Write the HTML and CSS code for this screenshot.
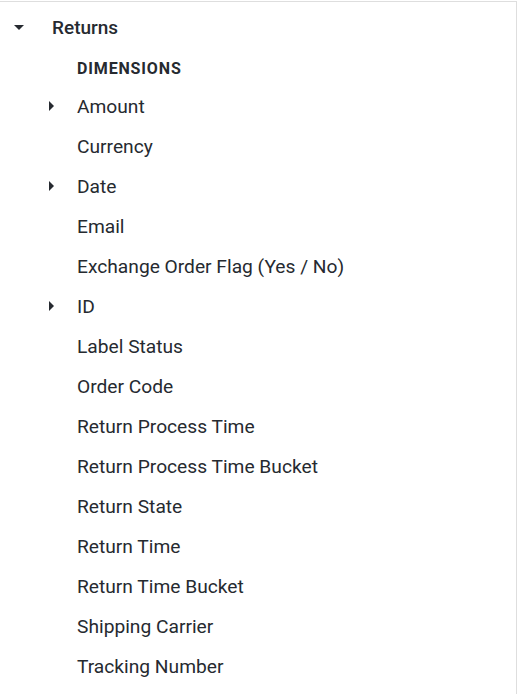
FILE: index.html
```html
<!DOCTYPE html>
<html>
<head>
<meta charset="utf-8">
<link rel="stylesheet" href="styles.css">
</head>
<body>
<div class="panel">
  <div class="group-row">
    <span class="caret caret-down"></span>
    <span class="group-label">Returns</span>
  </div>
  <div class="section-title">DIMENSIONS</div>
  <ul class="items">
    <li class="item"><span class="caret caret-right"></span><span class="label">Amount</span></li>
    <li class="item"><span class="caret"></span><span class="label">Currency</span></li>
    <li class="item"><span class="caret caret-right"></span><span class="label">Date</span></li>
    <li class="item"><span class="caret"></span><span class="label">Email</span></li>
    <li class="item"><span class="caret"></span><span class="label">Exchange Order Flag (Yes / No)</span></li>
    <li class="item"><span class="caret caret-right"></span><span class="label">ID</span></li>
    <li class="item"><span class="caret"></span><span class="label">Label Status</span></li>
    <li class="item"><span class="caret"></span><span class="label">Order Code</span></li>
    <li class="item"><span class="caret"></span><span class="label">Return Process Time</span></li>
    <li class="item"><span class="caret"></span><span class="label">Return Process Time Bucket</span></li>
    <li class="item"><span class="caret"></span><span class="label">Return State</span></li>
    <li class="item"><span class="caret"></span><span class="label">Return Time</span></li>
    <li class="item"><span class="caret"></span><span class="label">Return Time Bucket</span></li>
    <li class="item"><span class="caret"></span><span class="label">Shipping Carrier</span></li>
    <li class="item"><span class="caret"></span><span class="label">Tracking Number</span></li>
  </ul>
</div>
</body>
</html>
```
FILE: styles.css
```css
html, body {
  margin: 0;
  padding: 0;
  background: #ffffff;
}
body {
  font-family: Roboto, "Liberation Sans", sans-serif;
  color: #262a30;
}
.panel {
  margin-top: 1px;
  width: 516px;
  height: 693px;
  border-top: 1px solid #dedede;
  border-right: 1px solid #dedede;
  overflow: hidden;
}
.group-row {
  display: flex;
  align-items: center;
  height: 50px;
}
.group-row .caret {
  margin-left: 14px;
  width: 38px;
}
.group-label {
  font-size: 19px;
  font-weight: 500;
}
.caret {
  display: inline-block;
  width: 28px;
  margin-left: 49px;
  height: 10px;
  position: relative;
  flex: none;
}
.caret-down::before {
  content: "";
  position: absolute;
  left: 0;
  top: 3px;
  border-left: 5px solid transparent;
  border-right: 5px solid transparent;
  border-top: 5px solid #262a30;
}
.caret-right::before {
  content: "";
  position: absolute;
  left: 0;
  top: 0;
  border-top: 5px solid transparent;
  border-bottom: 5px solid transparent;
  border-left: 5px solid #262a30;
}
.section-title {
  padding-left: 77px;
  font-size: 16px;
  font-weight: 700;
  letter-spacing: 0.85px;
  height: 34px;
  line-height: 34px;
}
.items {
  list-style: none;
  margin: 0;
  padding: 0;
}
.item {
  display: flex;
  align-items: center;
  height: 40px;
  font-size: 19.2px;
}
```
